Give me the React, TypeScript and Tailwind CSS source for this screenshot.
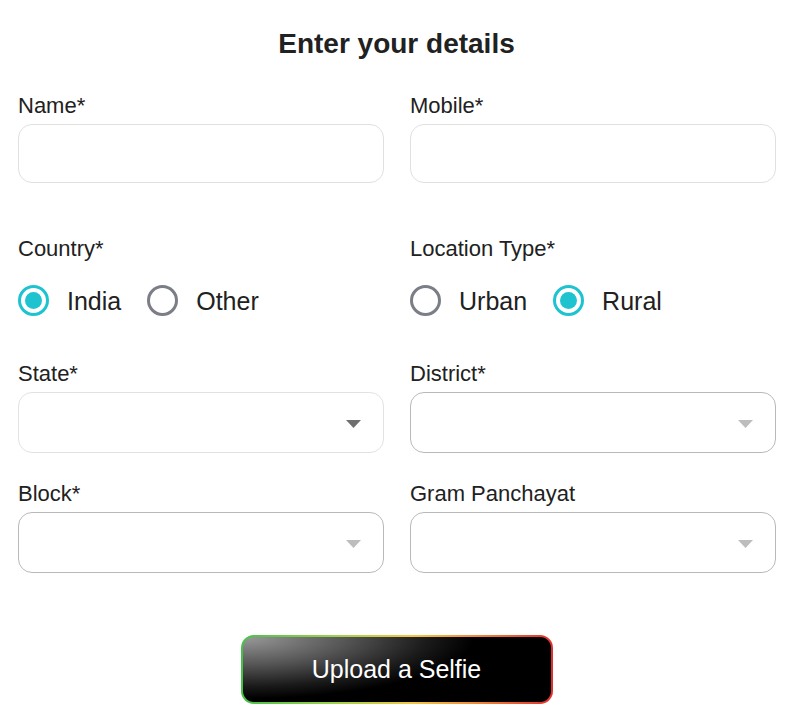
import React from "react";

type FieldProps = { label: string; children: React.ReactNode };

function Field({ label, children }: FieldProps) {
  return (
    <div className="flex flex-col">
      <label className="text-[22px] leading-[24px] text-[#212121]">{label}</label>
      <div className="mt-[6px]">{children}</div>
    </div>
  );
}

function TextBox() {
  return (
    <input
      type="text"
      className="block h-[59px] w-full rounded-[14px] border border-[#e0e0e0] bg-white px-4 outline-none"
    />
  );
}

function Select({ light, dark }: { light?: boolean; dark?: boolean }) {
  return (
    <div
      className={
        "relative h-[61px] w-full rounded-[14px] border bg-white " +
        (light ? "border-[#e2e2e2]" : "border-[#b9b9b9]")
      }
    >
      <svg
        className="absolute right-[22px] top-[27px]"
        width="15"
        height="8"
        viewBox="0 0 15 8"
      >
        <path d="M0 0 L15 0 L7.5 8 Z" fill={dark ? "#6f6f6f" : "#bdbdbd"} />
      </svg>
    </div>
  );
}

function Radio({ checked, label, first }: { checked?: boolean; label: string; first?: boolean }) {
  return (
    <div className={"flex items-center " + (first ? "" : "ml-[26px]")}>
      <span
        className={
          "flex h-[31px] w-[31px] items-center justify-center rounded-full border-[3px] " +
          (checked ? "border-[#1fc3d0]" : "border-[#7b7e86]")
        }
      >
        {checked && <span className="h-[17px] w-[17px] rounded-full bg-[#1fc3d0]" />}
      </span>
      <span className="ml-[18px] text-[25px] leading-[28px] text-[#212121]">{label}</span>
    </div>
  );
}

export default function App() {
  return (
    <div className="min-h-screen bg-white font-['Liberation_Sans',Arial,sans-serif] text-[#212121]">
      <h1 className="pl-[3px] pt-[27px] text-center text-[28px] font-bold leading-[34px]">
        Enter your details
      </h1>

      <div className="grid grid-cols-2 gap-x-[26px] pl-[18px] pr-[14px] pt-[33px]">
        <Field label="Name*">
          <TextBox />
        </Field>
        <Field label="Mobile*">
          <TextBox />
        </Field>
      </div>

      <div className="grid grid-cols-2 gap-x-[26px] pl-[18px] pr-[14px] pt-[54px]">
        <div>
          <div className="text-[22px] leading-[24px]">Country*</div>
          <div className="mt-[24px] flex">
            <Radio checked label="India" first />
            <Radio label="Other" />
          </div>
        </div>
        <div>
          <div className="text-[22px] leading-[24px]">Location Type*</div>
          <div className="mt-[24px] flex">
            <Radio label="Urban" first />
            <Radio checked label="Rural" />
          </div>
        </div>
      </div>

      <div className="grid grid-cols-2 gap-x-[26px] pl-[18px] pr-[14px] pt-[46px]">
        <Field label="State*">
          <Select light dark />
        </Field>
        <Field label="District*">
          <Select />
        </Field>
      </div>

      <div className="grid grid-cols-2 gap-x-[26px] pl-[18px] pr-[14px] pt-[29px]">
        <Field label="Block*">
          <Select />
        </Field>
        <Field label="Gram Panchayat">
          <Select />
        </Field>
      </div>

      <div className="flex justify-center pl-[3px] pt-[62px]">
        <button className="h-[69px] w-[312px] rounded-[13px] bg-[linear-gradient(90deg,#46c04a_0%,#9fd24a_30%,#f2c744_55%,#f08a3a_75%,#e0302c_100%)] p-[2px]">
          <span className="flex h-full w-full items-center justify-center rounded-[11px] bg-[radial-gradient(ellipse_75%_95%_at_0%_0%,#9a9a9a_0%,#555_45%,#1a1a1a_80%,#000_100%)] text-[25px] text-white">
            Upload a Selfie
          </span>
        </button>
      </div>
    </div>
  );
}
